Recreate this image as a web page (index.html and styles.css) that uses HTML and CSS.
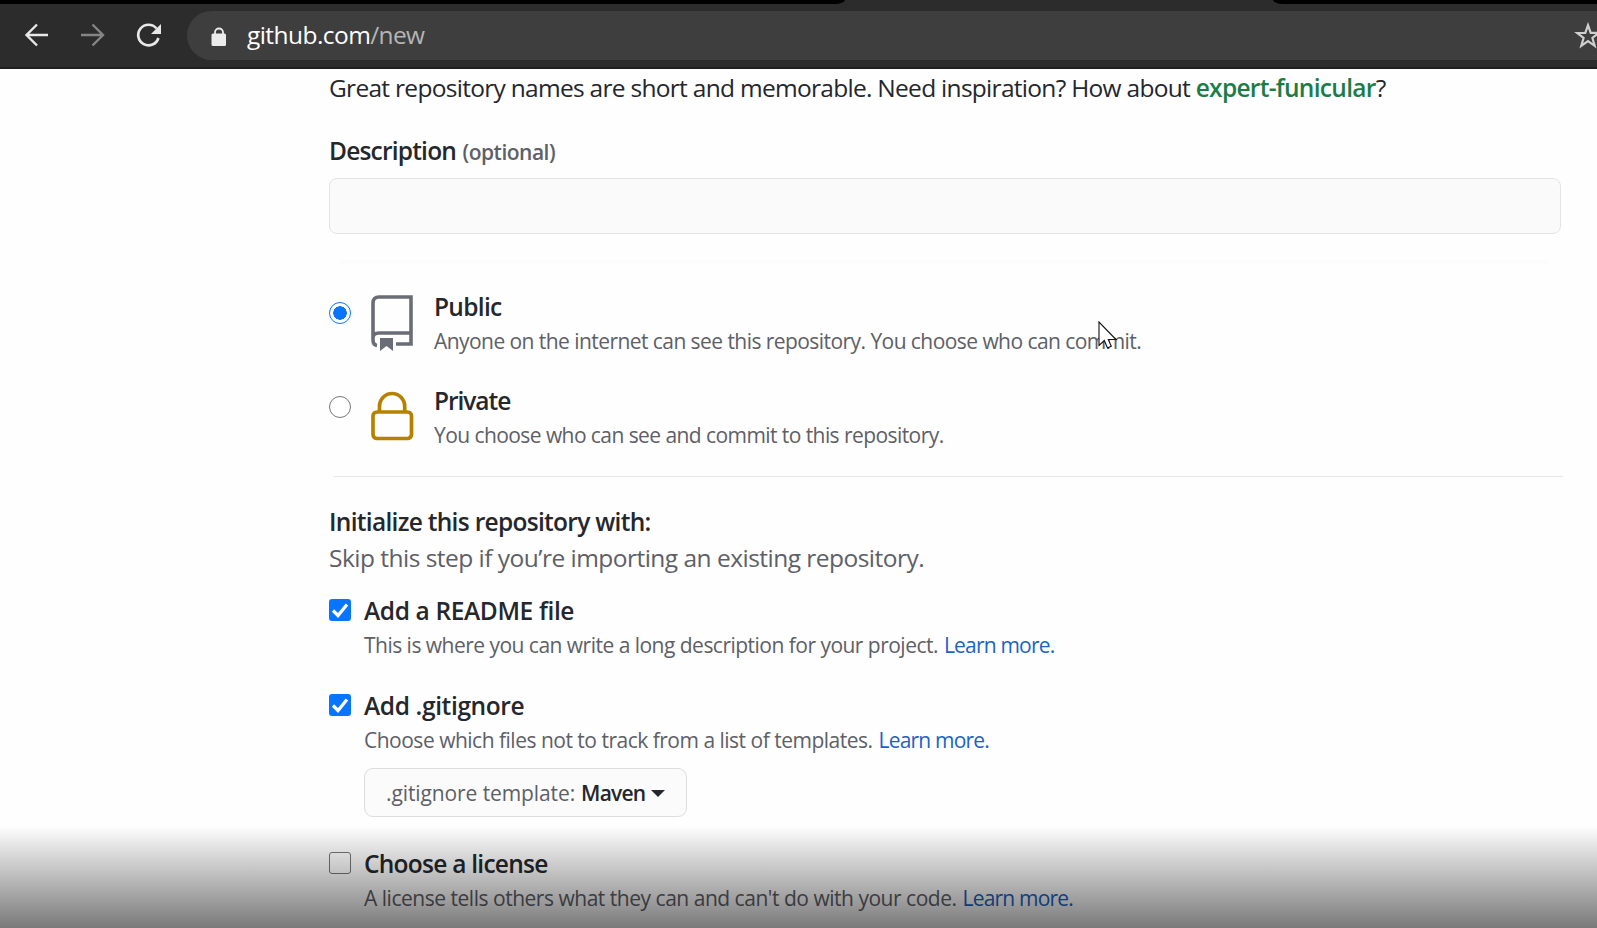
FILE: index.html
```html
<!DOCTYPE html>
<html lang="en">
<head>
<meta charset="utf-8">
<title>Create a New Repository</title>
<link rel="stylesheet" href="styles.css">
</head>
<body>
<header class="browser">
  <div class="tabs"><i class="tab-left"></i><i class="tab-right"></i></div>
  <div class="toolbar">
    <svg class="nav" width="180" height="48" viewBox="0 0 180 48" fill="none" stroke-width="2.4">
      <path d="M48 24H27M37 13.500 26.500 24 37 34.500" stroke="#e8e8e8"/>
      <path d="M81 24h21M92.500 13.500 103 24 92.500 34.500" stroke="#858585"/>
      <path d="M156.500 17.500A10.300 10.300 0 1 0 158.400 27" stroke="#e8e8e8" stroke-width="2.700"/>
      <path d="M161 13v10h-10z" fill="#e8e8e8"/>
    </svg>
    <div class="omnibox">
      <svg class="secure" width="16" height="20" viewBox="0 0 16 20"><path d="M4 8V5.500a4 4 0 0 1 8 0V8" fill="none" stroke="#ececec" stroke-width="1.800"/><rect x=".5" y="6.500" width="14.500" height="12.500" rx="1.500" fill="#ececec"/></svg>
      <span class="url"><span class="t host">github.com</span><span class="t path">/new</span></span>
      <svg class="star" width="28" height="28" viewBox="0 0 28 28"><path d="M14 3.200l2.700 7.600 8.100.2-6.400 5 2.300 7.800L14 19.200l-6.700 4.600 2.300-7.800-6.400-5 8.100-.2z" fill="none" stroke="#cfcfcf" stroke-width="2.200"/></svg>
    </div>
  </div>
</header>
<main class="page">
  <p class="line hint">Great repository names are short and memorable. Need inspiration? How about <b class="suggestion">expert-funicular</b>?</p>
  <div class="line label"><span class="t desc">Description</span><span class="t optional">(optional)</span></div>
  <div class="input"></div>
  <div class="rule soft"></div>
  <section class="option public">
    <span class="radio on"></span>
    <svg class="kind" width="44" height="58" viewBox="0 0 44 58" fill="none" stroke="#6a6d76" stroke-width="3.600"><path d="M7 51.500C4 51 3 49 3 46V9q0-6 6-6h32v47H26M3 44q0-5 6-5h32"/><path d="M10 44h13v13l-6.500-5L10 57z" fill="#6a6d76" stroke="none"/></svg>
    <div><div class="line title"><span class="t w-public">Public</span></div><div class="note"><span class="t w-anyone">Anyone on the internet can see this repository. You choose who can commit.</span></div></div>
  </section>
  <section class="option private">
    <span class="radio"></span>
    <svg class="kind" width="44" height="58" viewBox="0 0 44 58" fill="none" stroke="#b58200" stroke-width="3.700"><rect x="3" y="24" width="38.500" height="26.500" rx="4"/><path d="M9.500 24v-5.500a12.600 13 0 0 1 25.200 0V24"/></svg>
    <div><div class="line title"><span class="t w-private">Private</span></div><div class="note"><span class="t w-you">You choose who can see and commit to this repository.</span></div></div>
  </section>
  <div class="rule"></div>
  <div class="line title init"><span class="t w-init">Initialize this repository with:</span></div>
  <p class="line skip"><span class="t w-skip">Skip this step if you’re importing an existing repository.</span></p>
  <section class="check readme">
    <span class="box on"><svg width="22" height="22" viewBox="0 0 22 22"><path d="M4 11.500l5 5L18 5.500" fill="none" stroke="#fff" stroke-width="3.200"/></svg></span>
    <div><div class="line title"><span class="t w-readme">Add a README file</span></div><div class="note"><span class="t w-this">This is where you can write a long description for your project.</span><a class="t learn">Learn more.</a></div></div>
  </section>
  <section class="check ignore">
    <span class="box on"><svg width="22" height="22" viewBox="0 0 22 22"><path d="M4 11.500l5 5L18 5.500" fill="none" stroke="#fff" stroke-width="3.200"/></svg></span>
    <div><div class="line title"><span class="t w-ignore">Add .gitignore</span></div><div class="note"><span class="t w-which">Choose which files not to track from a list of templates.</span><a class="t learn">Learn more.</a></div>
      <div class="button"><span class="t w-tpl">.gitignore template:</span><b class="t w-maven">Maven</b><i class="caret"></i></div></div>
  </section>
  <section class="check license">
    <span class="box"></span>
    <div><div class="line title"><span class="t w-license">Choose a license</span></div><div class="note"><span class="t w-tells">A license tells others what they can and can't do with your code.</span><a class="t learn">Learn more.</a></div></div>
  </section>
</main>
<div class="shade"></div>
<svg class="cursor" width="20" height="30" viewBox="0 0 20 30"><path d="M1 1v23.500l5.300-5 3.200 7.500 3.800-1.700-3-6.800H18z" fill="#fff" stroke="#111" stroke-width="1.100"/></svg>
</body>
</html>
```
FILE: styles.css
```css
* { box-sizing: border-box; }
body { margin: 0; width: 1597px; height: 928px; overflow: hidden; position: relative; background: #fefefe; color: #24272c; font-family: "Open Sans", "Noto Sans", sans-serif; font-size: 24.500px; }
p { margin: 0; }
.t { display: inline-block; white-space: nowrap; }
.browser { height: 69px; background: #2c2c2c; border-bottom: 2px solid #1f1f1f; }
.tabs { display: flex; justify-content: space-between; height: 4px; }
.tab-left { width: 845px; background: #000; border-radius: 0 0 10px 0 / 0 0 4px 0; }
.tab-right { width: 324px; background: #000; border-radius: 0 0 0 10px / 0 0 0 4px; }
.toolbar { display: flex; margin-top: 7px; height: 49px; }
.nav { flex: none; margin-right: 7px; }
.omnibox { flex: 1; min-width: 0; display: flex; align-items: center; background: #3e3e3e; border-radius: 25px 0 0 25px; overflow: hidden; }
.secure { flex: none; margin: 2px 0 0 24px; }
.url { margin: -2px 0 0 20px; flex: 1; line-height: 32px; }
.host { color: #fff; letter-spacing: -.56px; }
.path { color: #b5b5b5; letter-spacing: -.7px; }
.star { flex: none; margin-right: -5px; }
.page { padding: 3px 35px 0 329px; }
.line { height: 32px; line-height: 32px; white-space: nowrap; }
.title, .label { font-weight: 600; }
.note { height: 27px; margin-top: 4px; line-height: 28px; font-size: 21px; color: #5d6066; white-space: nowrap; }
.hint { letter-spacing: -.71px; }
.suggestion { font-weight: 600; color: #1b7c46; }
.label { margin-top: 31px; }
.desc { letter-spacing: -.8px; }
.optional { margin-left: 6.500px; font-size: 21px; letter-spacing: -.5px; color: #5d6066; }
.input { margin-top: 11px; width: 1232px; height: 56px; border: 1px solid #e3e4e5; border-radius: 8px; background: #fafafa; }
.rule { height: 1px; margin: 28px 0 0 5px; width: 1229px; background: #e5e6e7; }
.rule.soft { height: 4px; margin: 26px 0 0 9px; width: 1210px; background: #fcfcfc; }
.option { display: grid; grid-template-columns: 40px 65px 1fr; height: 63px; }
.public { margin-top: 27px; }
.private { margin-top: 31px; }
.w-public { letter-spacing: -.7px; }
.w-anyone { letter-spacing: -.56px; }
.w-private { letter-spacing: -1.050px; }
.w-you { letter-spacing: -.57px; }
.radio { width: 22px; height: 22px; margin-top: 11px; border: 1.200px solid #777; border-radius: 50%; background: #fff; }
.radio.on { border-color: #0875ff; background: radial-gradient(circle, #0875ff 6.500px, #fff 7px); }
.kind { margin-top: 3px; margin-left: 1px; }
.init { margin-top: 29px; letter-spacing: -.7px; }
.skip { margin-top: 4px; letter-spacing: -.52px; color: #5d6066; }
.check { display: grid; grid-template-columns: 35px 1fr; }
.readme { margin-top: 21px; }
.ignore { margin-top: 32px; }
.license { margin-top: 31px; }
.w-readme, .w-ignore { letter-spacing: -.37px; }
.w-this { letter-spacing: -.52px; }
.w-which { letter-spacing: -.5px; }
.w-license { letter-spacing: -.75px; }
.w-tells { letter-spacing: -.48px; }
.box { width: 22px; height: 22px; margin-top: 4px; border: 1.200px solid #777; border-radius: 3px; }
.box.on { border: 0; background: #0875ff; }
.box svg { display: block; }
.learn { margin-left: 6px; letter-spacing: -.8px; color: #1c62c4; }
.button { display: flex; align-items: center; width: 323px; height: 49px; margin-top: 15px; padding: 1px 0 0 21px; border: 1px solid #dcdddf; border-radius: 9px; background: #fbfbfb; font-size: 21px; color: #5d6066; }
.w-tpl { letter-spacing: -.1px; }
.w-maven { margin-left: 6px; font-weight: 600; letter-spacing: -.8px; color: #24272c; }
.caret { margin-left: 6px; border: solid transparent; border-width: 7px 7px 0; border-top-color: #24272c; }
.shade { position: absolute; left: 0; right: 0; bottom: 0; height: 102px; background: linear-gradient(rgba(0,0,0,0), rgba(0,0,0,.52)); pointer-events: none; }
.cursor { position: absolute; left: 1098px; top: 321px; }
```
